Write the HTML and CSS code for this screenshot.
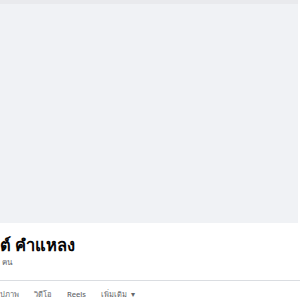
FILE: index.html
```html
<!DOCTYPE html>
<html lang="th">
<head>
    <meta charset="UTF-8">
    <title>Profile</title>
    <link rel="stylesheet" href="styles.css">
</head>
<body>
    <div class="page">
        <div class="topbar"></div>
        <div class="cover"></div>
        <div class="info">
            <h1 class="name">ต์ คำแหลง</h1>
            <p class="friends">คน</p>
        </div>
        <div class="divider"></div>
        <nav class="tabs">
            <span class="tab">ปภาพ</span>
            <span class="tab">วิดีโอ</span>
            <span class="tab">Reels</span>
            <span class="tab">เพิ่มเติม <span class="caret">▾</span></span>
        </nav>
    </div>
</body>
</html>
```

FILE: styles.css
```css
* {
    margin: 0;
    padding: 0;
    box-sizing: border-box;
}
body {
    width: 300px;
    height: 300px;
    overflow: hidden;
    background-color: #fff;
    font-family: "Noto Sans", "Liberation Sans", sans-serif;
}
.page {
    display: flex;
    flex-direction: column;
}
.topbar {
    height: 4px;
    width: 298px;
    background-color: #e9eaed;
}
.cover {
    height: 219px;
    width: 298px;
    background-color: #f0f2f5;
}
.info {
    padding-top: 10px;
}
.name {
    font-size: 16.5px;
    font-weight: 700;
    line-height: 24px;
    color: #050505;
}
.friends {
    font-size: 8px;
    line-height: 10px;
    color: #65676b;
    margin-left: 2px;
}
.divider {
    margin-top: 13px;
    height: 1px;
    background-color: #dadde1;
}
.tabs {
    display: flex;
    gap: 15px;
    padding-top: 6px;
}
.tab {
    font-size: 7.5px;
    line-height: 14px;
    color: #65676b;
    font-weight: 500;
}
.caret {
    font-size: 7.5px;
    margin-left: 2px;
}
```
